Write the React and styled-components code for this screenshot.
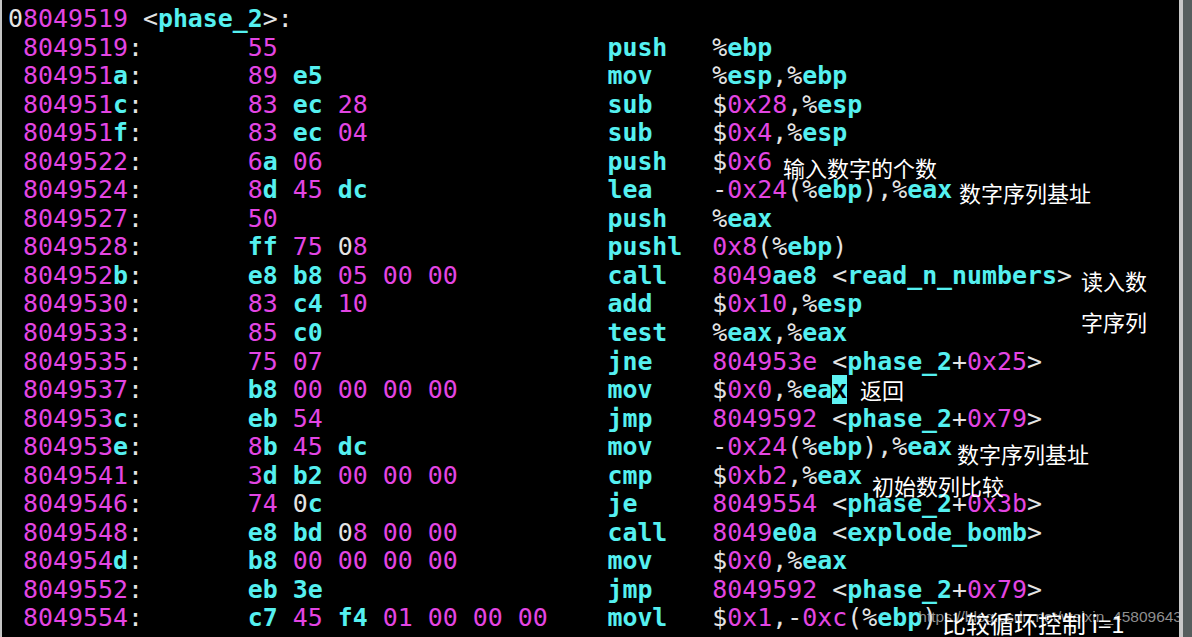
import React from "react";
import styled, { createGlobalStyle } from "styled-components";

const GlobalStyle = createGlobalStyle`
    html,
    body {
        margin: 0;
        padding: 0;
        background: #000;
    }
`;

const colors = {
    w: "#e4e4e4",
    m: "#e345e3",
    c: "#55f0f0",
};

const Screen = styled.div`
    position: relative;
    display: flex;
    width: 1192px;
    height: 637px;
    overflow: hidden;
    background: #000;
`;

const Terminal = styled.div`
    flex: 1;
    padding: 5px 0 0 6px;
    border-left: 2px solid #c4c4c4;
    font-family: "DejaVu Sans Mono", monospace;
    font-size: 24.9px;
    line-height: 28.55px;
    color: ${colors.w};
    white-space: pre;
    overflow: hidden;
`;

const Header = styled.div`
    height: 28.55px;
`;

const Row = styled.div`
    display: grid;
    grid-template-columns: 16ch 24ch 7ch 1fr;
    height: 28.55px;
`;

const Addr = styled.span`
    padding-left: 1ch;
`;

const Tok = styled.span`
    color: ${(p) => colors[p.$tone]};
    font-weight: ${(p) => (p.$tone === "c" ? 700 : 400)};
`;

const Cursor = styled.span`
    background: #5ef3f3;
    color: #000;
    font-weight: 700;
`;

const Scrollbar = styled.div`
    display: flex;
    width: 13px;
    &::before {
        content: "";
        width: 4px;
        background: #c8c8c8;
    }
    &::after {
        content: "";
        flex: 1;
        background: #565e5e;
    }
`;

/* captions pasted over the screenshot */
const Note = styled.div`
    position: absolute;
    left: ${(p) => p.$x}px;
    top: ${(p) => p.$y - p.$size * 0.55}px;
    font-family: "Noto Sans CJK SC", "Noto Sans", sans-serif;
    font-size: ${(p) => p.$size}px;
    line-height: 1;
    color: #fff;
    white-space: nowrap;
`;

const Watermark = styled.div`
    position: absolute;
    right: 10px;
    top: 609px;
    font-family: "Liberation Sans", Arial, sans-serif;
    font-size: 15.5px;
    line-height: 1;
    color: rgba(200, 200, 200, 0.72);
    white-space: nowrap;
`;

// {w..} {m..} {c..} force a colour, {k..} is the cursor block
const TOKEN = /\{([wmck])([^}]*)\}|0x[0-9a-f]+|[A-Za-z_][A-Za-z0-9_]*|[0-9]+[A-Za-z0-9_]*|[^A-Za-z0-9{]+/g;

function paint(src) {
    const out = [];
    let m;
    let i = 0;
    TOKEN.lastIndex = 0;
    while ((m = TOKEN.exec(src))) {
        const [s, forced, body] = m;
        if (forced === "k") {
            out.push(<Cursor key={i++}>{body}</Cursor>);
        } else if (forced) {
            out.push(<Tok key={i++} $tone={forced}>{body}</Tok>);
        } else if (s.startsWith("0x")) {
            out.push(<Tok key={i++} $tone="m">{s}</Tok>);
        } else if (/^[A-Za-z_]/.test(s)) {
            out.push(<Tok key={i++} $tone="c">{s}</Tok>);
        } else if (/^[0-9]/.test(s)) {
            const j = s.search(/[A-Za-z_]/);
            if (j < 0) {
                out.push(<Tok key={i++} $tone="m">{s}</Tok>);
            } else {
                out.push(<Tok key={i++} $tone="m">{s.slice(0, j)}</Tok>);
                out.push(<Tok key={i++} $tone="c">{s.slice(j)}</Tok>);
            }
        } else {
            out.push(<Tok key={i++} $tone="w">{s}</Tok>);
        }
    }
    return out;
}

const rows = [
    ["8049519", "55", "push", "%ebp"],
    ["804951a", "89 e5", "mov", "%esp,%ebp"],
    ["804951c", "83 ec 28", "sub", "$0x28,%esp"],
    ["804951f", "83 ec 04", "sub", "$0x4,%esp"],
    ["8049522", "6a 06", "push", "$0x6"],
    ["8049524", "8d 45 dc", "lea", "-0x24(%ebp),%eax"],
    ["8049527", "50", "push", "%eax"],
    ["8049528", "ff 75 {w0}8", "pushl", "0x8(%ebp)"],
    ["804952b", "e8 b8 05 00 00", "call", "8049ae8 <read_n_numbers>"],
    ["8049530", "83 c4 10", "add", "$0x10,%esp"],
    ["8049533", "85 c0", "test", "%eax,%eax"],
    ["8049535", "75 07", "jne", "{m804953e} <phase_2+0x25>"],
    ["8049537", "b8 00 00 00 00", "mov", "$0x0,%ea{kx}"],
    ["804953c", "eb 54", "jmp", "8049592 <phase_2+0x79>"],
    ["804953e", "8b 45 dc", "mov", "-0x24(%ebp),%eax"],
    ["8049541", "3d b2 00 00 00", "cmp", "$0xb2,%eax"],
    ["8049546", "74 {w0}c", "je", "8049554 <phase_2+0x3b>"],
    ["8049548", "e8 bd {w0}8 00 00", "call", "8049e0a <explode_bomb>"],
    ["804954d", "b8 00 00 00 00", "mov", "$0x0,%eax"],
    ["8049552", "eb {c3e}", "jmp", "8049592 <phase_2+0x79>"],
    ["8049554", "c7 45 f4 01 00 00 00", "movl", "$0x1,-0xc(%ebp)"],
];

const notes = [
    { x: 783, y: 168, size: 22, text: "输入数字的个数" },
    { x: 959, y: 193, size: 22, text: "数字序列基址" },
    { x: 1081, y: 281, size: 22, text: "读入数" },
    { x: 1081, y: 322, size: 22, text: "字序列" },
    { x: 860, y: 390, size: 22, text: "返回" },
    { x: 957, y: 454, size: 22, text: "数字序列基址" },
    { x: 872, y: 486, size: 22, text: "初始数列比较" },
];

const App = () => {
    return (
        <Screen>
            <GlobalStyle />
            <Terminal>
                <Header>{paint("{w0}8049519 <phase_2>:")}</Header>
                {rows.map(([addr, bytes, op, args]) => (
                    <Row key={addr}>
                        <Addr>{paint(addr + ":")}</Addr>
                        <span>{paint(bytes)}</span>
                        <span>{paint(op)}</span>
                        <span>{paint(args)}</span>
                    </Row>
                ))}
            </Terminal>
            <Scrollbar />
            {notes.map((n) => (
                <Note key={n.x + "-" + n.y} $x={n.x} $y={n.y} $size={n.size}>
                    {n.text}
                </Note>
            ))}
            <Watermark>https://blog.csdn.net/weixin_45809643</Watermark>
            <Note $x={942} $y={624} $size={24}>
                比较循环控制 i=1
            </Note>
        </Screen>
    );
};

export default App;
